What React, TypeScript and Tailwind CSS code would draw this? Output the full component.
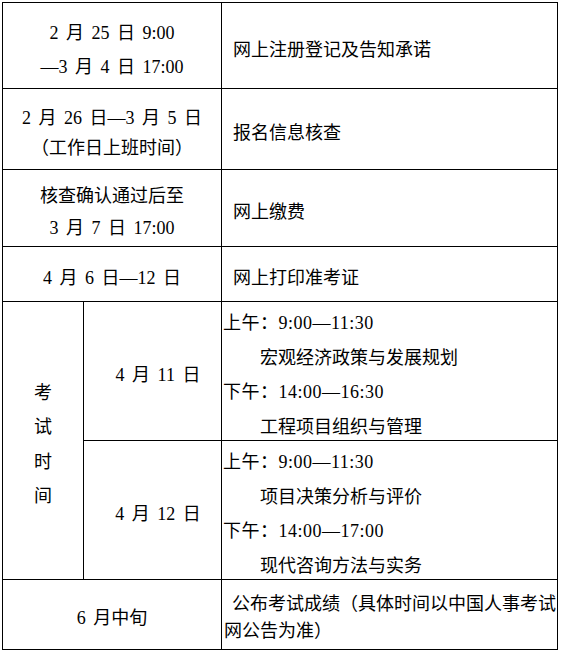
import React from 'react';

const font = { fontFamily: '"Liberation Serif", "Noto Sans CJK SC", serif' };

export default function App() {
    return (
        <div className="min-h-[652px] bg-white pl-[2px] pt-[2px]">
            <table
                className="table-fixed border-collapse text-[18px] text-black [word-spacing:3px]"
                style={font}
            >
                <colgroup>
                    <col className="w-[81px]" />
                    <col className="w-[138px]" />
                    <col className="w-[336px]" />
                </colgroup>
                <tbody>
                    {/* 注册 */}
                    <tr className="h-[86px]">
                        <td colSpan={2} className="border border-black pt-[8px] text-center align-middle leading-[34px]">
                            <div>2 月 25 日 9:00</div>
                            <div>—3 月 4 日 17:00</div>
                        </td>
                        <td className="border border-black pl-[11px] pt-[8px] align-middle leading-[34px]">
                            网上注册登记及告知承诺
                        </td>
                    </tr>

                    {/* 核查 */}
                    <tr className="h-[81px]">
                        <td colSpan={2} className="border border-black pt-[8px] text-center align-middle leading-[30px]">
                            <div>2 月 26 日—3 月 5 日</div>
                            <div>（工作日上班时间）</div>
                        </td>
                        <td className="border border-black pl-[11px] pt-[8px] align-middle leading-[30px]">
                            报名信息核查
                        </td>
                    </tr>

                    {/* 缴费 */}
                    <tr className="h-[77px]">
                        <td colSpan={2} className="border border-black pt-[8px] text-center align-middle leading-[32px]">
                            <div>核查确认通过后至</div>
                            <div>3 月 7 日 17:00</div>
                        </td>
                        <td className="border border-black pl-[11px] pt-[8px] align-middle leading-[32px]">
                            网上缴费
                        </td>
                    </tr>

                    {/* 准考证 */}
                    <tr className="h-[55px]">
                        <td colSpan={2} className="border border-black pt-[8px] text-center align-middle leading-[30px]">
                            4 月 6 日—12 日
                        </td>
                        <td className="border border-black pl-[11px] pt-[8px] align-middle leading-[30px]">
                            网上打印准考证
                        </td>
                    </tr>

                    {/* 考试时间 */}
                    <tr className="h-[139px]">
                        <td rowSpan={2} className="border border-black pt-[8px] text-center align-middle leading-[34.5px]">
                            <div>考</div>
                            <div>试</div>
                            <div>时</div>
                            <div>间</div>
                        </td>
                        <td className="border border-black pl-[11px] pt-[8px] text-center align-middle">
                            4 月 11 日
                        </td>
                        <td className="border border-black p-0 align-top">
                            <div className="h-[138px] pl-[1px] pt-[4px] leading-[34.5px]">
                                <div className="tracking-[0.5px]">上午：9:00—11:30</div>
                                <div className="pl-[37px]">宏观经济政策与发展规划</div>
                                <div className="tracking-[0.5px]">下午：14:00—16:30</div>
                                <div className="pl-[37px]">工程项目组织与管理</div>
                            </div>
                        </td>
                    </tr>
                    <tr className="h-[139px]">
                        <td className="border border-black pl-[11px] pt-[8px] text-center align-middle">
                            4 月 12 日
                        </td>
                        <td className="border border-black p-0 align-top">
                            <div className="h-[138px] pl-[1px] pt-[4px] leading-[34.5px]">
                                <div className="tracking-[0.5px]">上午：9:00—11:30</div>
                                <div className="pl-[37px]">项目决策分析与评价</div>
                                <div className="tracking-[0.5px]">下午：14:00—17:00</div>
                                <div className="pl-[37px]">现代咨询方法与实务</div>
                            </div>
                        </td>
                    </tr>

                    {/* 成绩 */}
                    <tr className="h-[70px]">
                        <td colSpan={2} className="border border-black pt-[8px] text-center align-middle leading-[27px]">
                            6 月中旬
                        </td>
                        <td className="border border-black pl-[2px] pt-[6px] align-middle leading-[27px]">
                            <div className="whitespace-nowrap pl-[8px]">公布考试成绩（具体时间以中国人事考试</div>
                            <div>网公告为准）</div>
                        </td>
                    </tr>
                </tbody>
            </table>
        </div>
    );
}
